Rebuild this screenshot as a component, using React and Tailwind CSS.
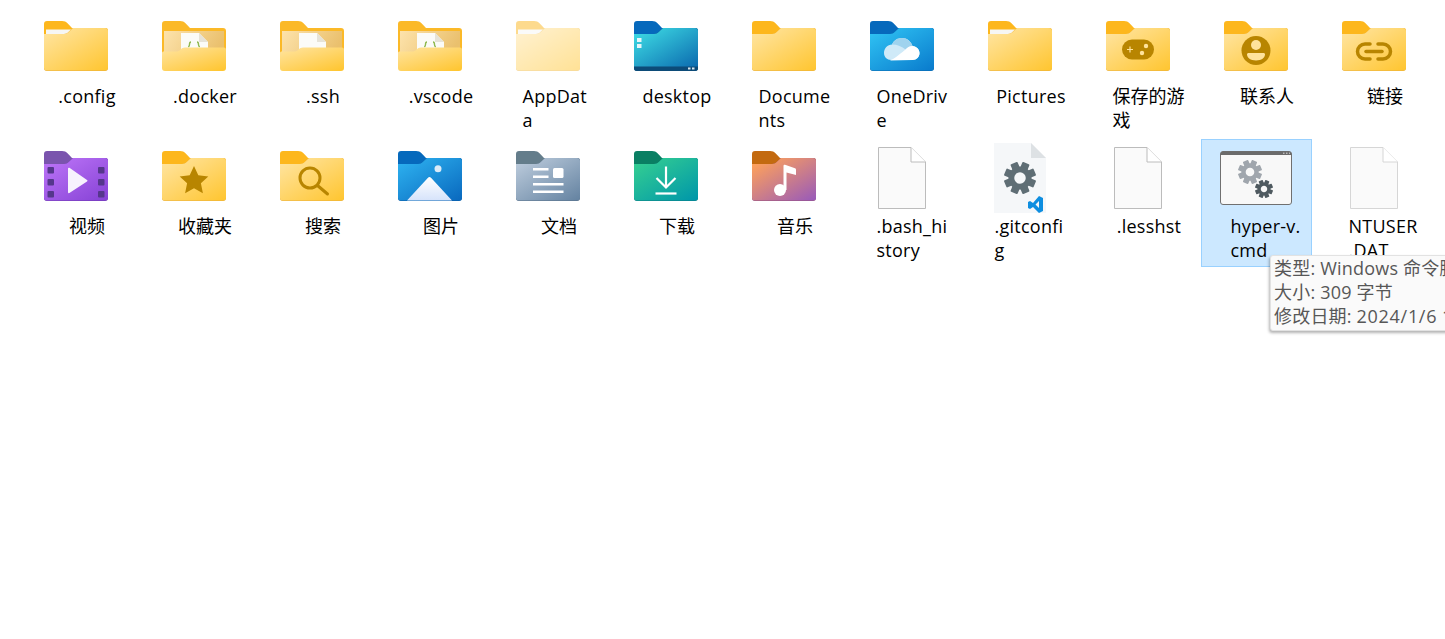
// Explorer-style icon grid with a hover tooltip.

const YELLOW = { tab: "#fdb71d", from: "#ffe39c", to: "#ffc632", edge: "#e9ae3a" };
const DARK_GLYPH = "#b88500";

function FolderShape({ id, tab, from, to, edge, children, paper, className = "" }) {
  return (
    <svg width="64" height="50" viewBox="0 0 64 50" className={`mb-1 ${className}`}>
      <defs>
        <linearGradient id={id} x1="0.1" y1="0.05" x2="0.95" y2="1">
          <stop offset="0" stopColor={from} />
          <stop offset="1" stopColor={to} />
        </linearGradient>
      </defs>
      <path d="M0 14V3a3 3 0 0 1 3-3h15c2.500 0 4 .8 5.500 2.200L28 7h33a3 3 0 0 1 3 3v6H0z" fill={tab} />
      {paper && <path d="M2 8.500h25l-4.500 4.500H2z" fill="#f6f6f4" />}
      <path d="M0 13h20c2 0 3.500-.8 5-2.200L29 7h32a3 3 0 0 1 3 3v37a3 3 0 0 1-3 3H3a3 3 0 0 1-3-3z" fill={edge} />
      <path d="M0 13h20c2 0 3.500-.8 5-2.200L29 7h32a3 3 0 0 1 3 3v36.500a3 3 0 0 1-3 3H3a3 3 0 0 1-3-3z" fill={`url(#${id})`} />
      {children}
    </svg>
  );
}

function OpenFolder({ id, fileGlyph }) {
  return (
    <svg width="64" height="50" viewBox="0 0 64 50" className="mb-1">
      <defs>
        <linearGradient id={`${id}-back`} x1="0" y1="0" x2="1" y2="0.3">
          <stop offset="0" stopColor="#fde3ac" />
          <stop offset="1" stopColor="#eac06d" />
        </linearGradient>
        <linearGradient id={`${id}-front`} x1="0.1" y1="0" x2="0.9" y2="1">
          <stop offset="0" stopColor="#ffe39c" />
          <stop offset="1" stopColor="#ffc632" />
        </linearGradient>
      </defs>
      <path d="M0 40V3a3 3 0 0 1 3-3h15c2.500 0 4 .8 5.500 2.200L28 7h33a3 3 0 0 1 3 3v30z" fill="#fbb928" />
      <rect x="2" y="10" width="60" height="28" fill={`url(#${id}-back)`} />
      <path d="M19 12h18l9 9v14H19z" fill="#fbfbf8" />
      <path d="M37 12l9 9h-9z" fill="#e6e3d8" />
      {fileGlyph && (
        <g fill="none" stroke="#8fb84e" strokeWidth="1.400">
          <path d="M29 21c-1.500 0-1.500 1-1.500 2.500s-.5 2-1.200 2.500" />
          <path d="M35 21c1.500 0 1.500 1 1.500 2.500s.5 2 1.200 2.500" />
        </g>
      )}
      <path d="M0 32c0-1 .8-1.500 1.500-1.500H14c2 0 3-.6 4.500-2 1.300-1.300 2.500-2 4.500-2h39a2 2 0 0 1 2 2V47a3 3 0 0 1-3 3H3a3 3 0 0 1-3-3z" fill={`url(#${id}-front)`} />
    </svg>
  );
}

function FileIcon({ stroke = "#bcbcbc" }) {
  return (
    <svg width="48" height="62" viewBox="0 0 48 62">
      <path d="M.5.5H33L47.500 15v46.500H.5z" fill="#fafafa" stroke={stroke} />
      <path d="M33 .5V15h14.500" fill="#fff" stroke={stroke} />
    </svg>
  );
}

function Gear({ cx, cy, r, color }) {
  const teeth = [0, 45, 90, 135, 180, 225, 270, 315];
  return (
    <g transform={`translate(${cx} ${cy})`} fill={color}>
      {teeth.map((a) => (
        <rect key={a} x={-r * 0.24} y={-r} width={r * 0.48} height={r * 0.5} rx={r * 0.06} transform={`rotate(${a + 22.5})`} />
      ))}
      <circle r={r * 0.54} fill="none" stroke={color} strokeWidth={r * 0.36} />
    </g>
  );
}

function GitConfigIcon() {
  return (
    <svg width="52" height="70" viewBox="0 0 52 70">
      <path d="M0 0h37l15 15v55H0z" fill="#f5f7f9" />
      <path d="M37 0v15h15z" fill="#dde1e4" />
      <Gear cx="26" cy="35" r="16" color="#5f6e75" />
      <path
        fillRule="evenodd"
        d="M45 53l4 2v13l-4 2-6-6-3 2-2-1v-6l2-1 3 2zM45 58l-3.500 3.500L45 65z"
        fill="#0e8ee0"
      />
    </svg>
  );
}

function CmdIcon() {
  return (
    <svg width="72" height="54" viewBox="0 0 72 54">
      <rect x=".5" y=".5" width="71" height="53" rx="2.500" fill="#f8f8f8" stroke="#707070" />
      <path d="M.5 3a2.500 2.500 0 0 1 2.500-2.500h66A2.500 2.500 0 0 1 71.500 3v1H.5z" fill="#6b6b6b" />
      <path d="M63 2.200h1.500M66 2.200h1.500M69 2.200h1" stroke="#ddd" strokeWidth="1" />
      <Gear cx="30" cy="21" r="12" color="#a0a6ad" />
      <Gear cx="44" cy="38" r="9" color="#4f5a60" />
    </svg>
  );
}

const items = [
  { name: ".config", icon: <FolderShape id="f-config" {...YELLOW} paper /> },
  { name: ".docker", icon: <OpenFolder id="f-docker" fileGlyph /> },
  { name: ".ssh", icon: <OpenFolder id="f-ssh" /> },
  { name: ".vscode", icon: <OpenFolder id="f-vscode" fileGlyph /> },
  { name: "AppDat\u200Ba", icon: <FolderShape id="f-appdata" {...YELLOW} paper className="opacity-50" /> },
  {
    name: "desktop",
    icon: (
      <FolderShape id="f-desktop" tab="#0669bc" from="#3cd8e2" to="#0a68ae" edge="#0c4b78">
        <rect x="3" y="17" width="4.500" height="4" fill="#e8f6fa" />
        <rect x="3" y="23" width="4.500" height="4" fill="#e8f6fa" />
        <path d="M0 45.500h64V47a3 3 0 0 1-3 3H3a3 3 0 0 1-3-3z" fill="#0c4b78" />
        <rect x="54" y="46.500" width="2.500" height="2" fill="#d7e6ee" />
        <rect x="58" y="46.500" width="2.500" height="2" fill="#d7e6ee" />
      </FolderShape>
    ),
  },
  { name: "Documents", icon: <FolderShape id="f-documents" {...YELLOW} /> },
  {
    name: "OneDrive",
    icon: (
      <FolderShape id="f-onedrive" tab="#0669bc" from="#2ec0f2" to="#0a7ccd" edge="#0867ad">
        <path d="M14 32c0-5 3.500-8 8-8.500 2-4.500 6-6.500 10-6.500 5 0 9 3.500 10.500 8 4 .3 7 3.500 7 7 0 4-3 7-7 7H21c-4 0-7-3-7-7z" fill="#cfeaf8" />
        <path d="M22 23.500c2-4.500 6-6.500 10-6.500 5 0 9 3.500 10.500 8-3 .2-5.500 1.500-7 3.500-3.500-3-8-5-13.500-5z" fill="#9fd3ee" />
        <path d="M20 39.500c4-1.500 8-5 15.500-11 2-2.500 5-3.500 7-3.500 4 .3 7 3.500 7 7 0 4-3 7-7 7z" fill="#fff" />
      </FolderShape>
    ),
  },
  { name: "Pictures", icon: <FolderShape id="f-pictures" {...YELLOW} paper /> },
  {
    name: "保存的游戏",
    icon: (
      <FolderShape id="f-games" {...YELLOW}>
        <rect x="16" y="18.500" width="32" height="20" rx="10" fill={DARK_GLYPH} />
        <path d="M24 25.500v6M21 28.500h6" stroke="#ffe39c" strokeWidth="1.200" />
        <circle cx="36" cy="32" r="2.200" fill="#ffe39c" />
        <circle cx="40" cy="25" r="2.200" fill="#ffe39c" />
      </FolderShape>
    ),
  },
  {
    name: "联系人",
    icon: (
      <FolderShape id="f-contacts" {...YELLOW}>
        <circle cx="32" cy="29.500" r="14.500" fill={DARK_GLYPH} />
        <circle cx="32" cy="24" r="5" fill="#ffe39c" />
        <path d="M23 33.500c0-1 .8-1.500 1.500-1.500h15c.8 0 1.500.5 1.500 1.500 0 3-3.500 6-9 6s-9-3-9-6z" fill="#ffe39c" />
      </FolderShape>
    ),
  },
  {
    name: "链接",
    icon: (
      <FolderShape id="f-link" {...YELLOW}>
        <g fill="none" stroke={DARK_GLYPH} strokeWidth="3.500" strokeLinecap="round">
          <path d="M28 23h-5a7.500 7.500 0 0 0 0 15h5" />
          <path d="M36 23h5a7.500 7.500 0 0 1 0 15h-5" />
          <path d="M24 30.500h16" />
        </g>
      </FolderShape>
    ),
  },
  {
    name: "视频",
    icon: (
      <FolderShape id="f-video" tab="#7a54ad" from="#ba72f6" to="#8743d6" edge="#6d38b0">
        {[16, 28, 40].map((y) => (
          <g key={y} fill="#55378c">
            <rect x="3.500" y={y} width="6.500" height="6.500" rx="1" />
            <rect x="54" y={y} width="6.500" height="6.500" rx="1" />
          </g>
        ))}
        <path d="M24 17.500c0-.8.8-1 1.400-.7L43 29c.6.4.6 1 0 1.400L25.400 42c-.6.3-1.400.1-1.400-.7z" fill="#f7f2fd" />
      </FolderShape>
    ),
  },
  {
    name: "收藏夹",
    icon: (
      <FolderShape id="f-fav" {...YELLOW}>
        <path d="M32 15l4.300 9.200 10 1.200-7.400 6.800 2 10L32 37.200l-8.900 5 2-10-7.400-6.800 10-1.200z" fill={DARK_GLYPH} />
      </FolderShape>
    ),
  },
  {
    name: "搜索",
    icon: (
      <FolderShape id="f-search" {...YELLOW}>
        <circle cx="30" cy="27" r="10" fill="none" stroke={DARK_GLYPH} strokeWidth="3" />
        <path d="M37.500 34.500L47.500 43" stroke={DARK_GLYPH} strokeWidth="3" strokeLinecap="round" />
      </FolderShape>
    ),
  },
  {
    name: "图片",
    icon: (
      <FolderShape id="f-images" tab="#0669bc" from="#2cafee" to="#0a6abf" edge="#0759a3">
        <defs>
          <linearGradient id="f-images-hill" x1="0" y1="0" x2="0" y2="1">
            <stop offset="0" stopColor="#ffffff" />
            <stop offset="1" stopColor="#d6e3fb" />
          </linearGradient>
        </defs>
        <path d="M9 49.500L30 26.800c.9-1 2-1 3 0L54 49.500z" fill="url(#f-images-hill)" />
        <circle cx="40" cy="17.700" r="3.500" fill="#dcebf8" />
      </FolderShape>
    ),
  },
  {
    name: "文档",
    icon: (
      <FolderShape id="f-docs" tab="#647d8b" from="#b9c9da" to="#6684a2" edge="#566f88">
        <g fill="#fff">
          <rect x="17" y="17" width="15.500" height="2.500" />
          <rect x="17" y="24.500" width="15.500" height="2.500" />
          <rect x="17" y="32" width="30.500" height="2.500" />
          <rect x="17" y="39.500" width="30.500" height="2.500" />
          <rect x="37" y="17" width="10.500" height="10" rx="1.500" />
        </g>
      </FolderShape>
    ),
  },
  {
    name: "下载",
    icon: (
      <FolderShape id="f-downloads" tab="#0a7f63" from="#33cd92" to="#0097a9" edge="#0a7b83">
        <g fill="none" stroke="#fff" strokeWidth="2.200">
          <path d="M32 15.500v20.500" />
          <path d="M22.500 27l9.500 9.500 9.500-9.500" />
          <path d="M21.500 42.500h21" />
        </g>
      </FolderShape>
    ),
  },
  {
    name: "音乐",
    icon: (
      <FolderShape id="f-music" tab="#c36a10" from="#ffa25a" to="#9a5bb8" edge="#94507f">
        <circle cx="28" cy="39" r="6" fill="#fff" />
        <path d="M31.500 39V15c0-1 .7-1.500 1.500-1.200l10 3.500c.7.2 1 .8 1 1.500V24l-9.500-2.500V39z" fill="#fff" />
      </FolderShape>
    ),
  },
  { name: ".bash_history", icon: <FileIcon /> },
  { name: ".gitconfig", icon: <GitConfigIcon /> },
  { name: ".lesshst", icon: <FileIcon /> },
  { name: "hyper-v.cmd", icon: <CmdIcon />, selected: true },
  { name: "NTUSER\u200B.DAT", icon: <FileIcon stroke="#d6d6d6" /> },
];

function Tooltip() {
  return (
    <div className="absolute left-[68px] top-[115px] z-10 w-[260px] rounded-[3px] border border-[#e2e2e2] bg-[#fafafa] pb-[2px] pl-[3px] tracking-[0.2px] text-[#575757] shadow-[-1px_2px_3px_rgba(0,0,0,0.3)] whitespace-nowrap">
      <p>类型: Windows 命令脚本</p>
      <p>大小: 309 字节</p>
      <p>
        修改日期: <span className="tracking-[0.7px]">2024/1/6</span> 19:20
      </p>
    </div>
  );
}

function GridItem({ item }) {
  const cls = item.selected ? "bg-[#cce8ff] border-[#99d1ff]" : "border-transparent";
  const latin = /^[\x00-\x7f\u200B]+$/.test(item.name);
  return (
    <div className={`relative flex h-[128px] flex-col items-center border pt-[2px] ${cls}`}>
      <div className="mr-[2px] flex h-[72px] w-[72px] shrink-0 items-center justify-center">{item.icon}</div>
      <div className={`ml-[21px] w-fit max-w-[73px] break-all ${latin ? "tracking-[0.25px]" : ""}`}>{item.name}</div>
      {item.selected && <Tooltip />}
    </div>
  );
}

export default function App() {
  return (
    <div className="h-[639px] w-full overflow-hidden bg-white text-[18px] leading-6 text-black font-['Open_Sans','Noto_Sans_CJK_SC',sans-serif]">
      <div className="grid grid-cols-[repeat(12,111px)] gap-x-[7px] gap-y-[2px] pl-[21px] pt-[9px]">
        {items.map((item) => (
          <GridItem key={item.name} item={item} />
        ))}
      </div>
    </div>
  );
}
